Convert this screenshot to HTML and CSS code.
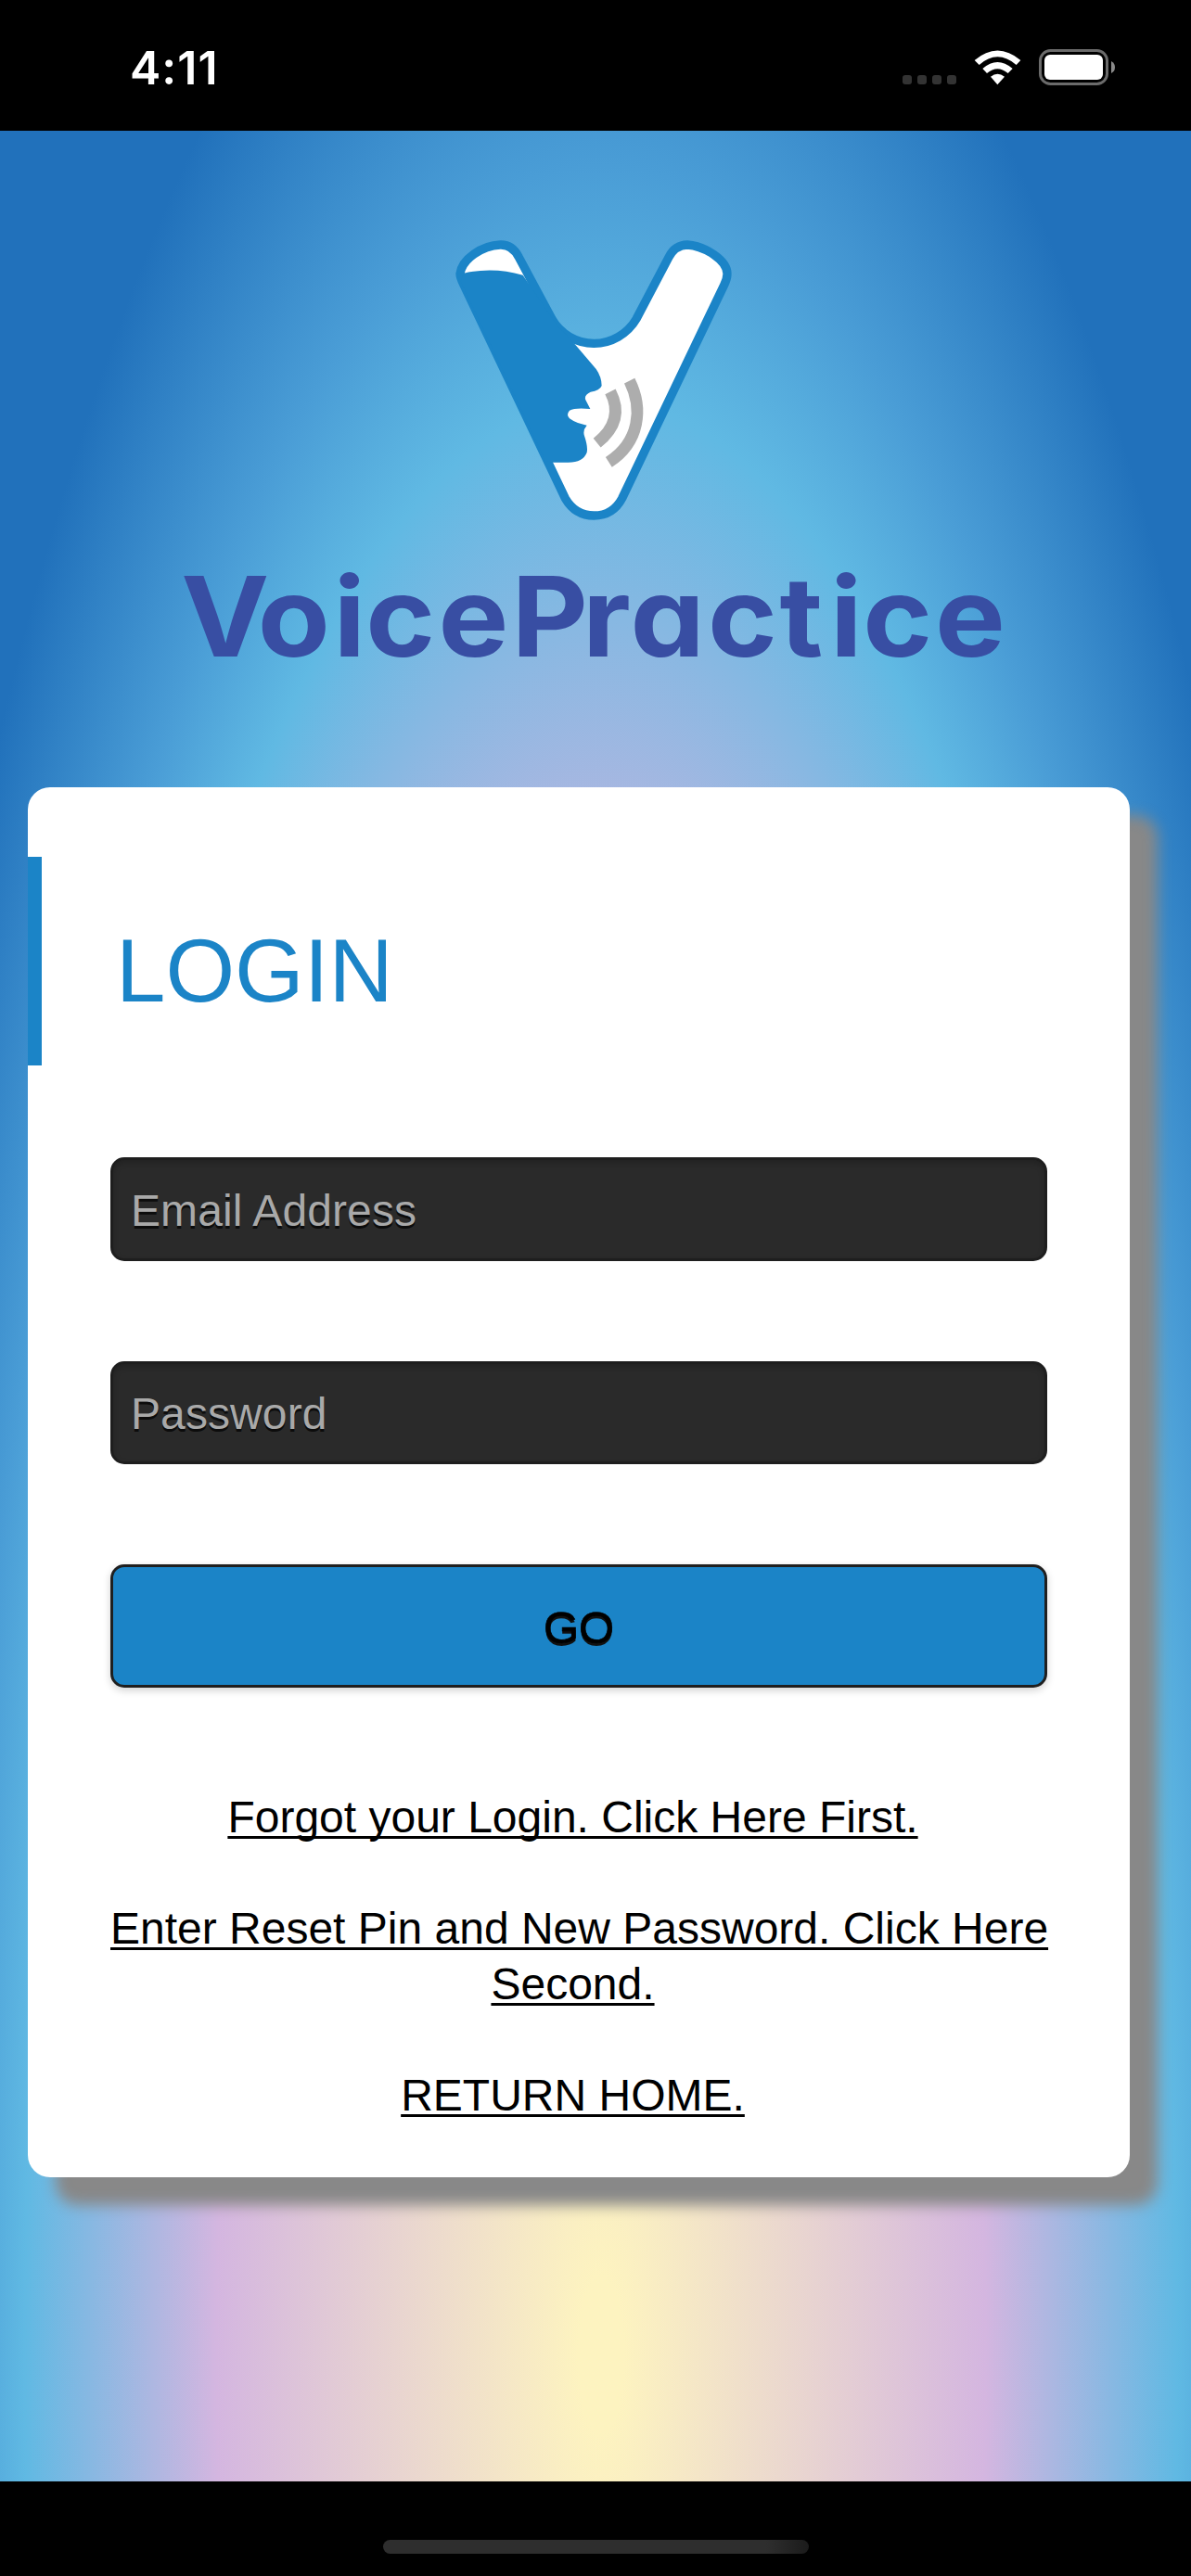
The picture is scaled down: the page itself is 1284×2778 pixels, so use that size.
FILE: index.html
```html
<!DOCTYPE html>
<html lang="en">
<head>
    <meta charset="utf-8">
    <title>VoicePractice Login</title>
    <link rel="stylesheet" href="styles.css">
</head>
<body>
    <div class="status-bar">
        <span class="status-time">4:11</span>
        <div class="status-icons">
            <div class="signal"><i></i><i></i><i></i><i></i></div>
            <svg class="wifi" width="51" height="38" viewBox="0 0 153 114">
                <path fill="#fff" d="M2 33 Q76 -30 151 33 L137 48 Q76 -4 17 48 Z"/>
                <path fill="#fff" d="M28 60 Q76 18 125 60 L110 75 Q76 46 42 75 Z"/>
                <path fill="#fff" d="M54 86 Q76 69 99 86 L76 112 Z"/>
            </svg>
            <svg class="battery" width="83" height="39" viewBox="0 0 83 39">
                <rect x="1.5" y="1.5" width="72" height="36" rx="11" fill="none" stroke="#6b6b6b" stroke-width="3"/>
                <rect x="6" y="6" width="63" height="27" rx="6" fill="#fff"/>
                <path d="M78 13 Q82 15 82 19.500 Q82 24 78 26 Z" fill="#8a8a8a"/>
            </svg>
        </div>
    </div>

    <div class="page">
        <div class="logo">
            <svg class="logo-mark" width="360" height="340" viewBox="0 0 1080 1020">
                <path class="logo-v" d="M108 166 C114 118 180 74 238 72 C268 71 286 88 298 112 L405 312 C432 360 485 391 541 391 C597 391 650 360 678 312 L783 112 C795 88 812 73 843 72 C900 76 972 122 972 166 C972 178 968 190 962 202 L632 892 C612 930 580 948 541 948 C502 948 470 930 448 892 L120 202 C112 186 108 178 108 166 Z"/>
                <path fill="#1b84c7" d="M120 164 Q215 142 311 170 L420 330 L484 399 L548 474 Q566 500 566 528 Q560 544 530 548 Q508 558 514 574 L529 603 Q480 598 462 608 Q450 622 462 634 Q484 650 518 656 Q504 672 510 690 Q522 725 518 744 Q506 776 458 776 L408 776 L385 772 L110 190 Z"/>
                <path class="logo-wave" d="M594 547 Q642 640 551 713"/>
                <path class="logo-wave" d="M656 512 C700 600 690 710 589 775"/>
            </svg>
            <svg class="logo-text" width="930" height="170" viewBox="180 580 930 170">
                <text transform="scale(1.07 1)" y="708" x="182.500 259.500 336 368.500 441.500 515.500 587 635 713 785.500 836.500 869.500 942">VoicePractice</text>
            </svg>
        </div>

        <div class="card">
            <h1 class="card-title">LOGIN</h1>
            <form class="login-form">
                <input type="email" placeholder="Email Address">
                <input type="password" placeholder="Password">
                <button type="button">GO</button>
            </form>
            <div class="links">
                <p class="trailing"><a href="#">Forgot your Login. Click Here First.</a></p>
                <p><a href="#">Enter Reset Pin and New Password. Click Here</a></p>
                <p class="trailing"><a href="#">Second.</a></p>
                <p class="trailing"><a href="#">RETURN HOME.</a></p>
            </div>
        </div>
    </div>

    <div class="home-bar"><span></span></div>
</body>
</html>
```

FILE: styles.css
```css
* {
    box-sizing: border-box;
}

body {
    margin: 0;
    width: 1284px;
    height: 2778px;
    display: flex;
    flex-direction: column;
    overflow: hidden;
    background: #000;
    font-family: "Liberation Sans", Helvetica, Arial, sans-serif;
}

/* Status bar */
.status-bar {
    height: 141px;
    padding: 0 81px 0 140px;
    display: flex;
    justify-content: space-between;
    align-items: flex-start;
    color: #fff;
}

.status-time {
    margin-top: 43px;
    font-family: Inter, sans-serif;
    font-size: 50px;
    font-weight: 600;
    letter-spacing: 1px;
    line-height: 60px;
}

.status-icons {
    margin-top: 53px;
    display: flex;
    align-items: flex-end;
    height: 39px;
}

.signal {
    display: flex;
    gap: 6px;
    margin: 0 19px 1px 0;
}

.signal i {
    width: 10px;
    height: 10px;
    border-radius: 3px;
    background: #333;
}

.wifi {
    margin-right: 19px;
}

/* Page */
.page {
    height: 2535px;
    padding: 99px 0 0 30px;
    background: radial-gradient(829px 2811px at 648px 2399px, #fdf3c0 0%, #fdf3c0 3%, #d4b6e0 50%, #60b9e3 75%, #4a9dd6 84%, #2171bb 100%);
}

.logo {
    height: 609px;
}

.logo svg {
    display: block;
}

.logo-mark {
    margin-left: 430px;
}

.logo-text {
    margin-left: 150px;
}

.logo-text text {
    font-family: Inter, sans-serif;
    font-size: 119px;
    font-weight: 700;
    font-feature-settings: "cv11";
    fill: #384ea3;
}

.logo-v {
    fill: #fff;
    stroke: #1b84c7;
    stroke-width: 28;
}

.logo-wave {
    fill: none;
    stroke: #adadad;
    stroke-width: 38;
}

/* Login card */
.card {
    width: 1188px;
    height: 1499px;
    padding-top: 75px;
    background: #fff;
    border-radius: 24px;
    box-shadow: 30px 30px 15px #888;
}

.card-title {
    height: 225px;
    margin: 0 0 99px;
    padding-left: 80px;
    padding-top: 16px;
    border-left: 15px solid #1b84c7;
    color: #1b84c7;
    font-size: 96px;
    font-weight: 400;
    line-height: 214px;
}

.login-form {
    width: 1010px;
    margin-left: 89px;
    display: flex;
    flex-direction: column;
}

.login-form input {
    height: 112px;
    margin: 0 0 108px;
    padding: 3px 19px 0;
    border: 3px solid #1e1e1e;
    border-radius: 15px;
    background: #2a2a2a;
    box-shadow: inset 0 3px 6px rgba(0, 0, 0, 0.2);
    font: 48px "Liberation Sans", Helvetica, Arial, sans-serif;
    letter-spacing: 0.1px;
    text-shadow: 0 3px 0 #0c0c0c;
    color: #fff;
}

.login-form input + input {
    height: 111px;
    padding-top: 1px;
}

.login-form input::placeholder {
    color: #a9a9a9;
    opacity: 1;
}

.login-form button {
    height: 133px;
    padding: 3px 0 0;
    border: 3px solid #1f1f1f;
    border-radius: 15px;
    background: #1b84c7;
    box-shadow: 0 3px 9px rgba(0, 0, 0, 0.18);
    font: 49px "Liberation Sans", Helvetica, Arial, sans-serif;
    -webkit-text-stroke: 0.7px #000;
    text-shadow: 0 3px 0 #111;
    color: #000;
}

.links {
    width: 1010px;
    margin: 110px 0 0 89px;
    text-align: center;
    font-size: 48px;
    line-height: 60px;
    white-space: nowrap;
}

.links p {
    margin: 0 0 60px;
}

.links p:nth-child(2) {
    margin-bottom: 0;
}

.links .trailing {
    padding-right: 13px;
}

.links a {
    color: #000;
    text-decoration: underline;
    text-decoration-thickness: 3px;
    text-underline-offset: 4px;
    text-decoration-skip-ink: none;
}

/* Home indicator */
.home-bar {
    height: 102px;
    display: flex;
    justify-content: center;
    align-items: flex-start;
}

.home-bar span {
    width: 459px;
    height: 15px;
    margin-top: 63px;
    border-radius: 8px;
    background: linear-gradient(to right, #2e2e2e 90%, #1b1b1b);
}
```
